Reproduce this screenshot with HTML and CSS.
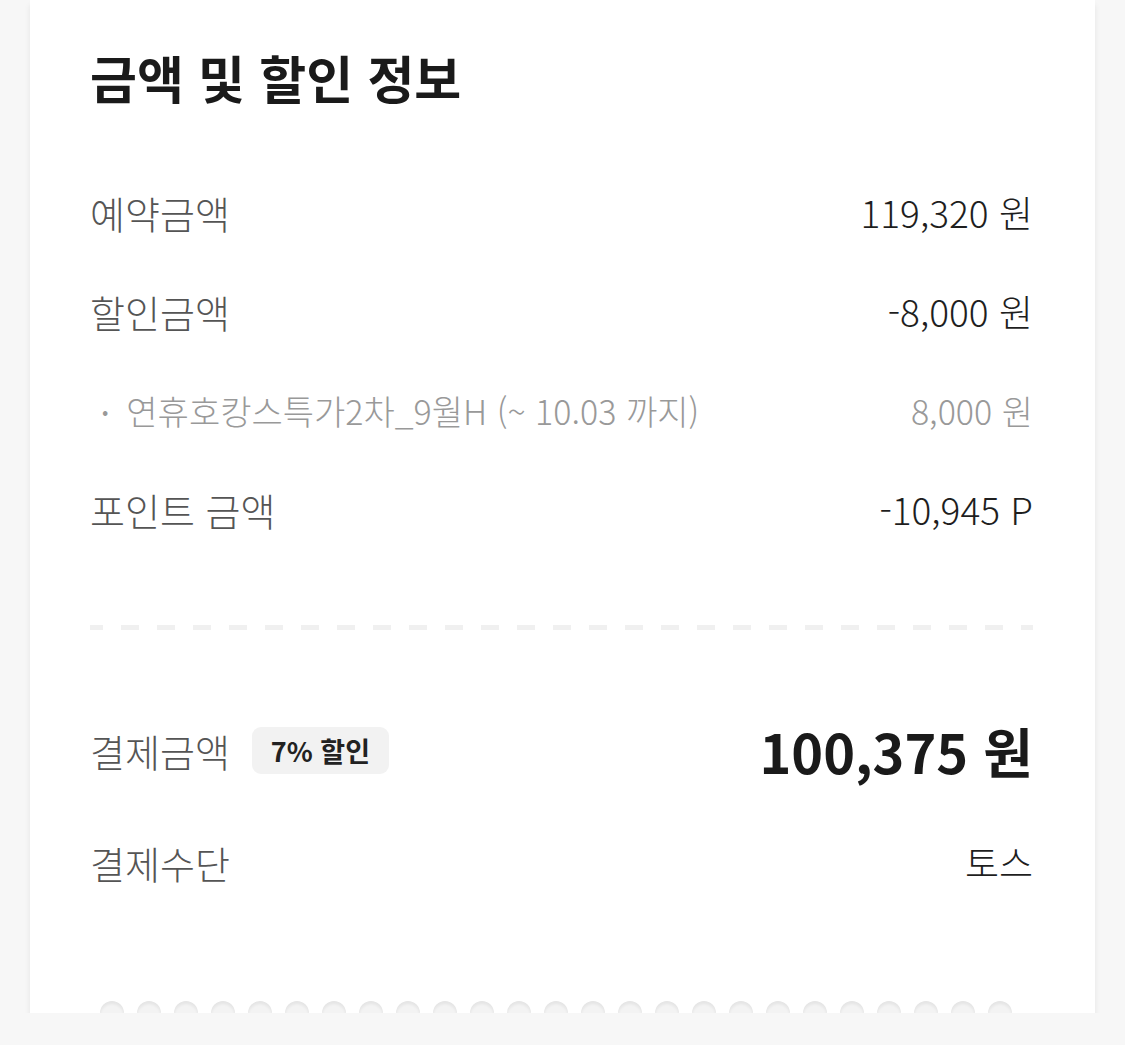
FILE: index.html
```html
<!DOCTYPE html>
<html lang="ko">
    <head>
        <meta charset="UTF-8" />
        <meta name="viewport" content="width=device-width, initial-scale=1.0"/>
        <title>금액 및 할인 정보</title>
        <link rel="stylesheet" href="styles.css">
    </head>
    <body>
        <div class="card">
            <h2 class="title">금액 및 할인 정보</h2>
            <div class="rows">
                <div class="row">
                    <div class="label">예약금액</div>
                    <div class="value">119,320 원</div>
                </div>
                <div class="row">
                    <div class="label">할인금액</div>
                    <div class="value">-8,000 원</div>
                </div>
                <div class="row sub">
                    <div class="label"><span class="dot">•</span>연휴호캉스특가2차_9월H (~ 10.03 까지)</div>
                    <div class="value">8,000 원</div>
                </div>
                <div class="row">
                    <div class="label">포인트 금액</div>
                    <div class="value">-10,945 P</div>
                </div>
            </div>
            <div class="dash"></div>
            <div class="row total">
                <div class="label">결제금액 <span class="badge">7% 할인</span></div>
                <div class="value">100,375 원</div>
            </div>
            <div class="row method">
                <div class="label">결제수단</div>
                <div class="value">토스</div>
            </div>
            <div class="holes">
                <span></span><span></span><span></span><span></span><span></span>
                <span></span><span></span><span></span><span></span><span></span>
                <span></span><span></span><span></span><span></span><span></span>
                <span></span><span></span><span></span><span></span><span></span>
                <span></span><span></span><span></span><span></span><span></span>
            </div>
        </div>
    </body>
</html>
```

FILE: styles.css
```css
body {
    margin: 0;
    background-color: #f7f7f7;
    font-family: "Noto Sans CJK KR", "Noto Sans", sans-serif;
    color: #222;
}
.card {
    margin: 0 30px;
    width: 1065px;
    background-color: #fff;
    padding: 47px 62px 0 60px;
    box-sizing: border-box;
    box-shadow: 0 5px 6px rgba(0, 0, 0, 0.08);
}
.title {
    margin: 0;
    height: 60px;
    line-height: 60px;
    font-size: 51px;
    font-weight: bold;
    color: #1a1a1a;
}
.rows {
    display: flex;
    flex-direction: column;
    gap: 49px;
    margin-top: 80px;
}
.row {
    display: flex;
    justify-content: space-between;
    align-items: center;
    height: 50px;
}
.label {
    font-size: 38px;
    font-weight: 300;
    color: #555;
    display: flex;
    align-items: center;
}
.value {
    font-size: 37px;
    font-weight: 300;
    color: #1e1e1e;
}
.sub .label, .sub .value {
    font-size: 34px;
    color: #999;
}
.dot {
    font-size: 20px;
    margin: 0 18px 0 12px;
}
.dash {
    margin-top: 91px;
    height: 5px;
    background: repeating-linear-gradient(90deg, #f0f0f0 0 18px, transparent 18px 36px);
    background-position: -5px 0;
}
.total {
    margin-top: 90px;
    height: 60px;
}
.badge {
    margin-left: 22px;
    background-color: #f2f2f2;
    border-radius: 9px;
    padding: 0 19px;
    height: 47px;
    line-height: 47px;
    font-size: 27px;
    font-weight: bold;
    color: #222;
}
.total .value {
    font-size: 54px;
    font-weight: bold;
    color: #1a1a1a;
}
.method {
    margin-top: 57px;
}
.holes {
    display: flex;
    gap: 13px;
    margin: 114px 0 0 10px;
    height: 12px;
}
.holes span {
    width: 24px;
    height: 12px;
    border-radius: 12px 12px 0 0;
    background-color: #f3f3f3;
    box-shadow: inset 0 3px 3px rgba(0, 0, 0, 0.06);
}
```
